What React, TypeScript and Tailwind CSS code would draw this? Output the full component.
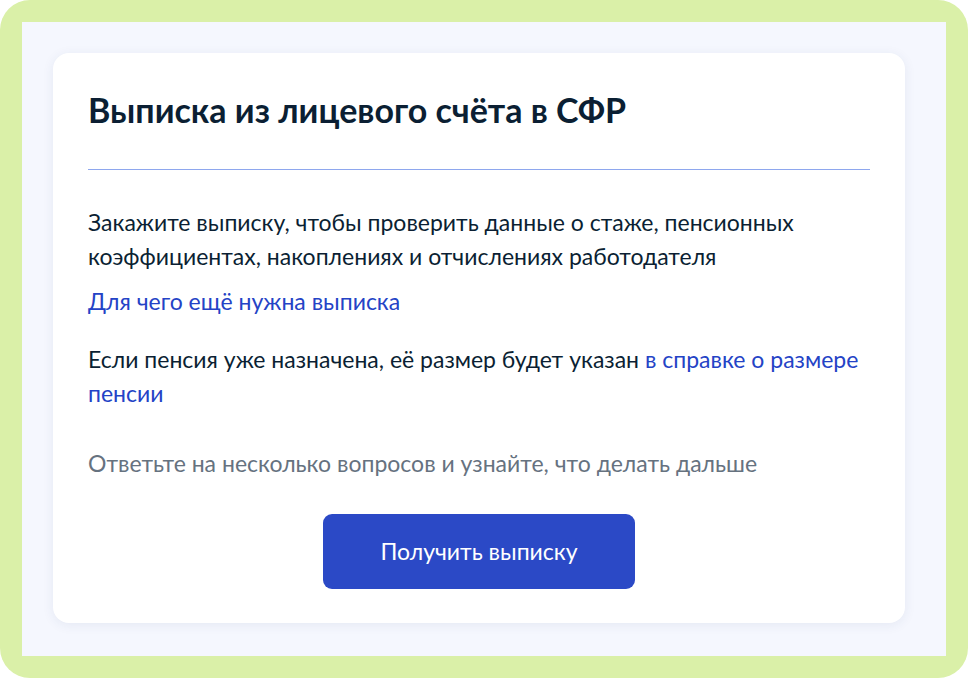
import React from "react";

export default function App() {
  return (
    <div className="w-[968px] h-[678px] bg-white" style={{ fontFamily: "Lato, 'Noto Sans', sans-serif" }}>
      <div className="w-full h-full rounded-[30px] bg-[#daf0a8] p-[22px]">
        <div className="w-full h-full bg-[#f5f7fe] pl-[31px] pt-[31px] pr-[41px] pb-[33px]">
          <div className="w-full h-full bg-white rounded-[16px] shadow-[0_2px_12px_rgba(40,60,120,0.08)] px-[35px] pt-[37px]">
            <h1 className="text-[34px] leading-[40px] font-bold text-[#0b1f33]">
              Выписка из лицевого счёта в СФР
            </h1>
            <div className="mt-[39px] h-px bg-[#8ea7ee]" />
            <p className="mt-[35px] text-[23px] leading-[34px] text-[#0b1f33]">
              Закажите выписку, чтобы проверить данные о стаже, пенсионных коэффициентах, накоплениях и отчислениях работодателя
            </p>
            <p className="mt-[12px] text-[23px] leading-[33px] text-[#2443c6]">
              <a>Для чего ещё нужна выписка</a>
            </p>
            <p className="mt-[24px] text-[23px] leading-[34px] text-[#0b1f33]">
              Если пенсия уже назначена, её размер будет указан{" "}
              <span className="text-[#2443c6]">в справке о размере пенсии</span>
            </p>
            <p className="mt-[37px] text-[23px] leading-[33px] text-[#66727f]">
              Ответьте на несколько вопросов и узнайте, что делать дальше
            </p>
            <div className="mt-[34px] flex justify-center">
              <button className="w-[312px] h-[75px] rounded-[9px] bg-[#2b49c6] text-white text-[23px]">
                Получить выписку
              </button>
            </div>
          </div>
        </div>
      </div>
    </div>
  );
}
